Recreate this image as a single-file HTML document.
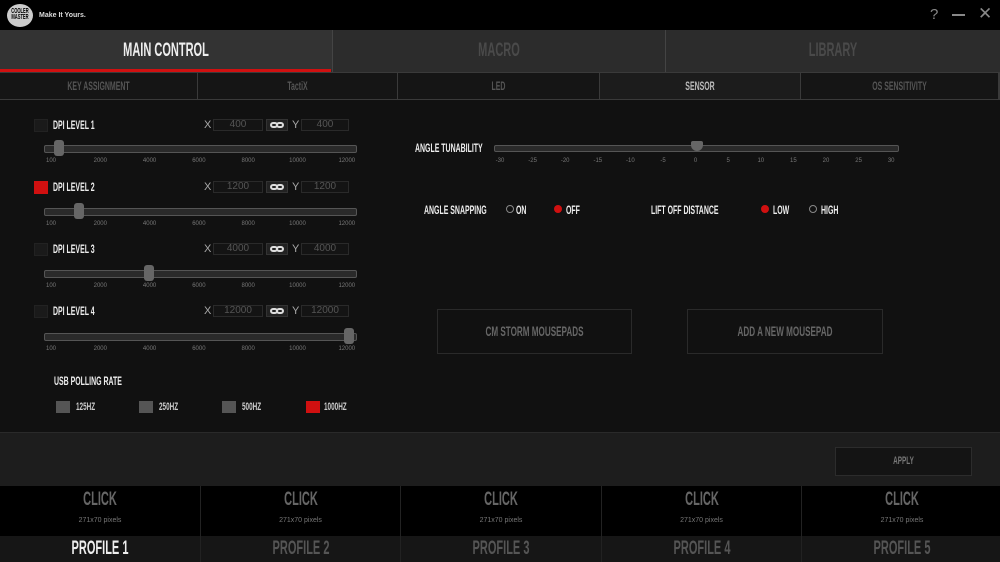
<!DOCTYPE html>
<html><head><meta charset="utf-8"><style>
*{margin:0;padding:0;box-sizing:border-box}
body{width:1000px;height:562px;overflow:hidden;background:#111;position:relative;font-family:"Liberation Sans",sans-serif;}
.a{position:absolute}
.c{font-family:"Liberation Sans",sans-serif;font-weight:bold;white-space:nowrap;transform:scaleX(.58);transform-origin:0 50%}
.cc{transform-origin:50% 50%}
.lbl{color:#eee;font-size:12px}
.inp{position:absolute;height:12px;border:1px solid #2a2a2a;background:#141414;color:#555;font-size:10px;text-align:center;line-height:10px;font-family:"Liberation Sans",sans-serif}
.trk{position:absolute;height:8px;border:1px solid #555;background:#2a2a2a;border-radius:2px}
.tk{position:absolute;font-size:6px;color:#777;font-family:"Liberation Sans",sans-serif;transform:translateX(-50%)}
.th{position:absolute;width:10px;height:16px;background:#666;border-radius:3px}
.cb{position:absolute;width:14px;height:13px;background:#1a1a1a;border:1px solid #222}
.rd{position:absolute;width:8px;height:8px;border-radius:50%}
</style></head><body>
<!-- top bar -->
<div class="a" style="left:0;top:0;width:1000px;height:30px;background:#000"></div>
<div class="a" style="left:7px;top:4px;width:26px;height:23px;border-radius:50%;background:#ccc"></div>
<div class="a c cc" style="left:5px;top:9px;font-size:7px;color:#000;line-height:6px;width:30px;text-align:center">COOLER<br>MASTER</div>
<div class="a" style="left:39px;top:12px;font-size:7px;color:#ddd;font-weight:bold;font-family:'Liberation Sans',sans-serif">Make It Yours.</div>
<div class="a" style="left:930px;top:6px;font-size:15px;color:#888;font-family:'Liberation Sans',sans-serif">?</div>
<div class="a" style="left:952px;top:14px;width:13px;height:2px;background:#888"></div>
<div class="a" style="left:978px;top:4px;font-size:17px;color:#888;font-family:'Liberation Sans',sans-serif">✕</div>
<!-- main tabs -->
<div class="a" style="left:0;top:30px;width:1000px;height:42px;background:#2c2c2c"></div>
<div class="a" style="left:0;top:30px;width:332px;height:40px;background:#333"></div>
<div class="a" style="left:0;top:69px;width:331px;height:3px;background:#d01010"></div>
<div class="a" style="left:332px;top:30px;width:1px;height:42px;background:#444"></div>
<div class="a" style="left:665px;top:30px;width:1px;height:42px;background:#444"></div>
<div class="a c cc" style="left:0;top:40px;width:332px;text-align:center;font-size:19px;color:#eee">MAIN CONTROL</div>
<div class="a c cc" style="left:333px;top:40px;width:332px;text-align:center;font-size:19px;color:#4a4a4a">MACRO</div>
<div class="a c cc" style="left:666px;top:40px;width:334px;text-align:center;font-size:19px;color:#4a4a4a">LIBRARY</div>
<!-- sub tabs -->
<div class="a" style="left:0;top:72px;width:1000px;height:28px;background:#151515;border-top:1px solid #3a3a3a;border-bottom:1px solid #3a3a3a"></div>
<div class="a" style="left:600px;top:73px;width:200px;height:26px;background:#1c1c1c"></div>
<div class="a" style="left:197px;top:72px;width:1px;height:28px;background:#3a3a3a"></div>
<div class="a" style="left:397px;top:72px;width:1px;height:28px;background:#3a3a3a"></div>
<div class="a" style="left:599px;top:72px;width:1px;height:28px;background:#3a3a3a"></div>
<div class="a" style="left:800px;top:72px;width:1px;height:28px;background:#3a3a3a"></div>
<div class="a" style="left:998px;top:72px;width:2px;height:28px;background:#3a3a3a"></div>
<div class="a c cc" style="left:0;top:79px;width:197px;text-align:center;font-size:12px;color:#555">KEY ASSIGNMENT</div>
<div class="a c cc" style="left:198px;top:79px;width:199px;text-align:center;font-size:12px;color:#555">TactiX</div>
<div class="a c cc" style="left:398px;top:79px;width:201px;text-align:center;font-size:12px;color:#555">LED</div>
<div class="a c cc" style="left:600px;top:79px;width:200px;text-align:center;font-size:12px;color:#bbb">SENSOR</div>
<div class="a c cc" style="left:801px;top:79px;width:197px;text-align:center;font-size:12px;color:#555">OS SENSITIVITY</div>

<!-- DPI rows -->
<div id="dpi"></div>
<div class="cb" style="left:34px;top:119px"></div>
<div class="cb" style="left:34px;top:181px;background:#d01010;border-color:#d01010"></div>
<div class="cb" style="left:34px;top:243px"></div>
<div class="cb" style="left:34px;top:305px"></div>
<div class="a c lbl" style="left:53px;top:118px">DPI LEVEL 1</div>
<div class="a c lbl" style="left:53px;top:180px">DPI LEVEL 2</div>
<div class="a c lbl" style="left:53px;top:242px">DPI LEVEL 3</div>
<div class="a c lbl" style="left:53px;top:304px">DPI LEVEL 4</div>

<script>
var rows=[[125,148,'400',59],[187,211,'1200',79],[249,273,'4000',149],[311,336,'12000',349]];
var h='';
rows.forEach(function(r){
 var y=r[0];
 h+='<div class="a" style="left:204px;top:'+(y-6)+'px;font-size:11px;color:#aaa;font-family:Liberation Sans,sans-serif">X</div>';
 h+='<div class="inp" style="left:213px;top:'+(y-6)+'px;width:50px">'+r[2]+'</div>';
 h+='<div class="a" style="left:266px;top:'+(y-6)+'px;width:22px;height:12px;background:#222;border:1px solid #333"></div>';
 h+='<div class="a" style="left:270px;top:'+(y-3)+'px;width:8px;height:6px;border:2px solid #ddd;border-radius:3px"></div>';
 h+='<div class="a" style="left:276px;top:'+(y-3)+'px;width:8px;height:6px;border:2px solid #ddd;border-radius:3px"></div>';
 h+='<div class="a" style="left:292px;top:'+(y-6)+'px;font-size:11px;color:#aaa;font-family:Liberation Sans,sans-serif">Y</div>';
 h+='<div class="inp" style="left:301px;top:'+(y-6)+'px;width:48px">'+r[2]+'</div>';
 var s=r[1];
 h+='<div class="trk" style="left:44px;top:'+(s-3)+'px;width:313px"></div>';
 h+='<div class="th" style="left:'+(r[3]-5)+'px;top:'+(s-8)+'px"></div>';
 var t=['100','2000','4000','6000','8000','10000','12000'];
 t.forEach(function(v,i){var x=51+i*49.3;h+='<div class="tk" style="left:'+x+'px;top:'+(s+10)+'px">'+v+'</div>';});
});
document.getElementById('dpi').outerHTML=h;
</script>

<!-- USB -->
<div class="a c lbl" style="left:54px;top:374px;font-size:12px">USB POLLING RATE</div>
<div class="a" style="left:56px;top:401px;width:14px;height:12px;background:#555"></div>
<div class="a c lbl" style="left:76px;top:401px;font-size:11px;color:#ccc">125HZ</div>
<div class="a" style="left:139px;top:401px;width:14px;height:12px;background:#555"></div>
<div class="a c lbl" style="left:159px;top:401px;font-size:11px;color:#ccc">250HZ</div>
<div class="a" style="left:222px;top:401px;width:14px;height:12px;background:#555"></div>
<div class="a c lbl" style="left:242px;top:401px;font-size:11px;color:#ccc">500HZ</div>
<div class="a" style="left:306px;top:401px;width:14px;height:12px;background:#d01010"></div>
<div class="a c lbl" style="left:324px;top:401px;font-size:11px;color:#ccc">1000HZ</div>

<!-- angle -->
<div class="a c lbl" style="left:415px;top:141px;font-size:12px">ANGLE TUNABILITY</div>
<div class="trk" style="left:494px;top:145px;width:405px;height:7px"></div>
<div class="th" style="left:691px;top:141px;width:12px;height:10px;border-radius:2px 2px 6px 6px"></div>
<div id="ang"></div>
<script>
var g='';for(var i=0;i<13;i++){var v=-30+i*5;g+='<div class="tk" style="left:'+(500+i*32.6)+'px;top:158px">'+v+'</div>';}
document.getElementById('ang').outerHTML=g;
</script>
<div class="a c lbl" style="left:424px;top:203px;font-size:12px">ANGLE SNAPPING</div>
<div class="rd" style="left:506px;top:205px;border:1px solid #888"></div>
<div class="a c lbl" style="left:516px;top:203px;font-size:12px">ON</div>
<div class="rd" style="left:554px;top:205px;background:#d01010"></div>
<div class="a c lbl" style="left:566px;top:203px;font-size:12px">OFF</div>
<div class="a c lbl" style="left:651px;top:203px;font-size:12px">LIFT OFF DISTANCE</div>
<div class="rd" style="left:761px;top:205px;background:#d01010"></div>
<div class="a c lbl" style="left:773px;top:203px;font-size:12px">LOW</div>
<div class="rd" style="left:809px;top:205px;border:1px solid #888"></div>
<div class="a c lbl" style="left:821px;top:203px;font-size:12px">HIGH</div>

<div class="a" style="left:437px;top:309px;width:195px;height:45px;border:1px solid #2a2a2a"></div>
<div class="a c cc" style="left:437px;top:323px;width:195px;color:#666;font-size:14px;text-align:center">CM STORM MOUSEPADS</div>
<div class="a" style="left:687px;top:309px;width:196px;height:45px;border:1px solid #2a2a2a"></div>
<div class="a c cc" style="left:687px;top:323px;width:196px;color:#666;font-size:14px;text-align:center">ADD A NEW MOUSEPAD</div>

<!-- apply panel -->
<div class="a" style="left:0;top:432px;width:1000px;height:54px;background:#1d1d1d;border-top:1px solid #2a2a2a"></div>
<div class="a" style="left:835px;top:447px;width:137px;height:29px;background:#141414;border:1px solid #2c2c2c"></div>
<div class="a c cc" style="left:835px;top:455px;width:137px;color:#777;font-size:11px;text-align:center">APPLY</div>

<!-- profiles -->
<div class="a" style="left:0;top:486px;width:1000px;height:50px;background:#000"></div>
<div class="a" style="left:0;top:536px;width:1000px;height:26px;background:#161616"></div>
<div id="prof"></div>
<script>
var p='';for(var i=0;i<5;i++){var x=i*200.5;
p+='<div class="a c cc" style="left:'+x+'px;top:489px;width:200px;text-align:center;font-size:19px;color:#666">CLICK</div>';
p+='<div class="a" style="left:'+x+'px;top:517px;width:200px;text-align:center;font-size:7px;color:#777;font-family:Liberation Sans,sans-serif">271x70 pixels</div>';
p+='<div class="a c cc" style="left:'+x+'px;top:538px;width:200px;text-align:center;font-size:19px;color:'+(i==0?'#eee':'#555')+'">PROFILE '+(i+1)+'</div>';
if(i>0)p+='<div class="a" style="left:'+(x-1)+'px;top:486px;width:1px;height:76px;background:#222"></div>';}
document.getElementById('prof').outerHTML=p;
</script>
</body></html>
